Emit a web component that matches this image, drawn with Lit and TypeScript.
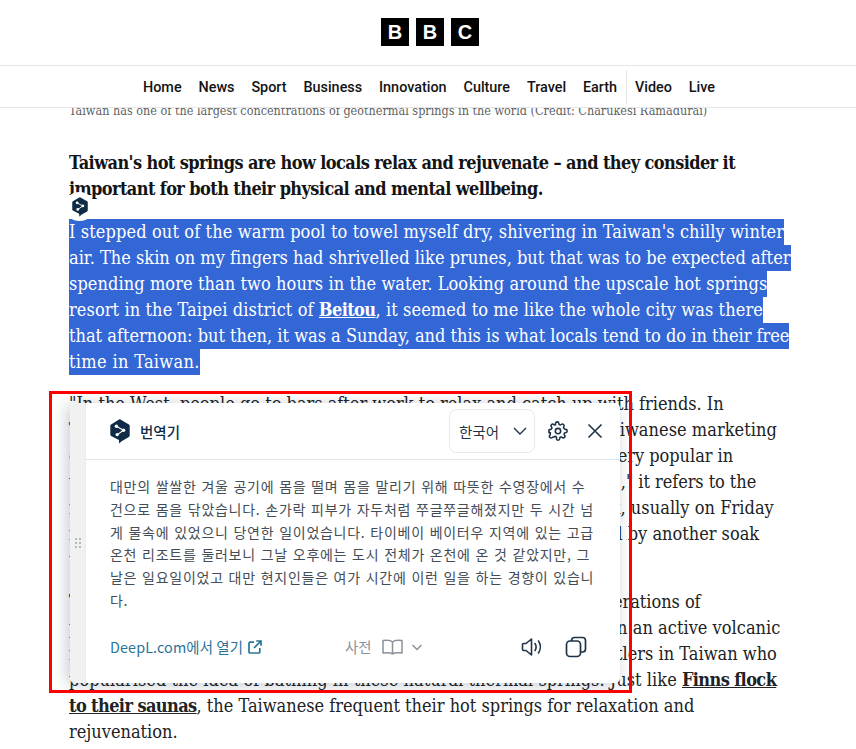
import { LitElement, html, css } from "lit";
import { customElement } from "lit/decorators.js";

const logo = (w: number, h: number) => html`<svg width=${w} height=${h} viewBox="0 0 20 25">
  <path fill="#0f2b46" d="M10 0.3 18.9 5.4a1.6 1.6 0 0 1 .8 1.4V16.6a1.6 1.6 0 0 1-.8 1.4L11.6 22.2 9.2 24.6 8.9 20.9 1.1 16.9a1.6 1.6 0 0 1-.8-1.4V6.8a1.6 1.6 0 0 1 .8-1.4L9 .5a1.6 1.6 0 0 1 1 -.2Z"/>
  <g stroke="#fff" stroke-width="1.1" fill="none"><path d="M6.4 7.3 13.4 11.2 7.4 15.6"/></g>
  <g fill="#fff"><circle cx="6.4" cy="7.3" r="1.7"/><circle cx="13.6" cy="11.2" r="1.7"/><circle cx="7.2" cy="15.6" r="1.7"/></g>
</svg>`;

const navItems = ["Home", "News", "Sport", "Business", "Innovation", "Culture", "Travel", "Earth"];

const track = (v: number) => `letter-spacing:${v}px`;

@customElement("app-root")
export class AppRoot extends LitElement {
  static styles = css`
    :host { display: block; position: relative; width: 856px; height: 749px; overflow: hidden; background: #fff; }
    .top { position: relative; z-index: 1; background: #fff; height: 108px; box-sizing: border-box; border-bottom: 1px solid #e6e6e6; }
    .brand { height: 66px; box-sizing: border-box; padding: 18px 0 0 4px; display: flex; justify-content: center; gap: 7px; border-bottom: 1px solid #e6e6e6; }
    .brand span { width: 28px; height: 28px; background: #000; color: #fff; display: flex; align-items: center; justify-content: center; font: 700 20px "Liberation Sans", sans-serif; }
    nav { height: 41px; box-sizing: border-box; padding: 1px 0 0 2px; display: flex; align-items: center; justify-content: center; font: 500 14.4px Roboto, sans-serif; color: #141414; }
    nav a { padding: 0 8.45px; }
    nav a.sep { border-left: 1px solid #e6e6e6; height: 34px; display: flex; align-items: center; }
    article { margin-top: -5px; padding-left: 69px; font-family: "DejaVu Serif Condensed", "DejaVu Serif", serif; font-size: 18px; line-height: 26px; color: #202224; white-space: nowrap; }
    .cap { font-size: 12.5px; line-height: 16px; color: #5f5f5f; margin-bottom: 31px; }
    .lead { font-weight: 700; margin-bottom: 17px; letter-spacing: -0.6px; color: #141414; }
    .para { margin-bottom: 16px; }
    .sel { display: block; width: fit-content; background: #3367d6; color: #fff; }
    a.u { font-weight: 700; text-decoration: underline; color: inherit; letter-spacing: -0.6px; }

    .chip { position: absolute; left: 64px; top: 192px; width: 31px; height: 29px; border-radius: 50%; background: #fff; display: flex; align-items: center; justify-content: center; z-index: 2; }
    .mark { position: absolute; left: 49px; top: 391px; width: 583px; height: 302px; box-sizing: border-box; border: 3px solid #f00; z-index: 3; pointer-events: none; }
    .panel { position: absolute; left: 70px; top: 403px; width: 550px; height: 280px; display: flex; background: #fff; border-radius: 5px; box-shadow: -3px 2px 16px rgba(15, 43, 70, .24); overflow: hidden; z-index: 2; font-family: "Noto Sans CJK KR", "Noto Sans", sans-serif; }
    .grip { width: 16px; box-sizing: border-box; background: #f1f1f2; flex: none; display: flex; align-items: center; justify-content: center; border-right: 1px solid #ececef; }
    .main { flex: 1; display: flex; flex-direction: column; min-width: 0; }
    .head { height: 57px; box-sizing: border-box; display: flex; align-items: center; padding: 0 16px 0 24px; border-bottom: 1px solid #dfe4ec; }
    .title { margin-left: 10px; font-size: 14.5px; font-weight: 500; color: #0f2b46; }
    .lang { margin-left: auto; width: 86px; height: 44px; box-sizing: border-box; border: 1px solid #e6e9ef; border-radius: 8px; display: flex; align-items: center; justify-content: space-between; padding: 0 5px 0 9px; font-size: 14.5px; color: #1f3347; }
    .gear { margin-left: 13px; display: flex; }
    .x { margin-left: 18px; display: flex; }
    .body { padding: 15px 0 0 24px; font-size: 14px; letter-spacing: .73px; word-spacing: 1px; line-height: 22.8px; color: #444c55; white-space: nowrap; height: 161px; box-sizing: border-box; }
    .foot { flex: 1; display: flex; align-items: center; padding: 0 33px 11px 24px; font-size: 14.4px; }
    .open { color: #2a7398; display: flex; align-items: center; gap: 5px; letter-spacing: .1px; }
    .dict { margin-left: 83px; color: #8a9199; display: flex; align-items: center; gap: 10px; }
    .chev { margin-left: -2px; }
    .acts { margin-left: auto; display: flex; align-items: center; gap: 22px; }
  `;

  render() {
    return html`
      <div class="top">
        <div class="brand"><span>B</span><span>B</span><span>C</span></div>
        <nav>
          ${navItems.map((n) => html`<a>${n}</a>`)}<a class="sep">Video</a><a>Live</a>
        </nav>
      </div>
      <article>
        <div class="cap">Taiwan has one of the largest concentrations of geothermal springs in the world (Credit: Charukesi Ramadurai)</div>
        <div class="lead">Taiwan's hot springs are how locals relax and rejuvenate – and they consider it<br />important for both their physical and mental wellbeing.</div>
        <div class="para">
          <span class="sel" style=${track(0.126)}>I stepped out of the warm pool to towel myself dry, shivering in Taiwan's chilly winter </span>
          <span class="sel" style=${track(0.02)}>air. The skin on my fingers had shrivelled like prunes, but that was to be expected after </span>
          <span class="sel" style=${track(0.085)}>spending more than two hours in the water. Looking around the upscale hot springs </span>
          <span class="sel" style=${track(0.1)}>resort in the Taipei district of <a class="u">Beitou</a>, it seemed to me like the whole city was there </span>
          <span class="sel">that afternoon: but then, it was a Sunday, and this is what locals tend to do in their free </span>
          <span class="sel" style=${track(0.33)}>time in Taiwan.</span>
        </div>
        <div class="para">
          "In the West, people go to bars after work to relax and catch up with friends. In<br />
          <span style=${track(0.045)}>Taiwan, we go to the hot springs with our families," says a local Taiwanese marketing</span><br />
          <span style=${track(-0.04)}>executive who resides and works in the city of Taipei. "Soaking is very popular in</span><br />
          <span style=${track(-0.06)}>winter, and when people say they are going to 'soak in warm water'," it refers to the</span><br />
          <span style=${track(0.05)}>relaxing night together with friends and families after a long week, usually on Friday</span><br />
          night or Saturday morning, with a good meal at the hotels followed by another soak<br />
          the next day.
        </div>
        <div class="para">
          <span style=${track(-0.04)}>The hot springs have been part of Taiwanese culture for many generations of</span><br />
          <span style=${track(0.035)}>people across the island, which sits in a geothermal belt directly on an active volcanic</span><br />
          <span style=${track(0.015)}>range. However, it was the Japanese colonial leaders and early settlers in Taiwan who</span><br />
          <span style=${track(0.04)}>popularised the idea of bathing in these natural thermal springs. Just like</span> <a class="u">Finns flock<br />to their saunas</a>, the Taiwanese frequent their hot springs for relaxation and<br />
          rejuvenation.
        </div>
      </article>

      <div class="chip">${logo(16, 20)}</div>

      <div class="panel">
        <div class="grip">
          <svg width="8" height="12" viewBox="0 0 8 12" fill="#b4b8be"><rect x="1" y="1" width="2" height="2"/><rect x="5" y="1" width="2" height="2"/><rect x="1" y="5" width="2" height="2"/><rect x="5" y="5" width="2" height="2"/><rect x="1" y="9" width="2" height="2"/><rect x="5" y="9" width="2" height="2"/></svg>
        </div>
        <div class="main">
          <div class="head">
            ${logo(20, 25)}
            <span class="title">번역기</span>
            <div class="lang">
              <span>한국어</span>
              <svg width="18" height="18" viewBox="0 0 18 18" fill="none" stroke="#1f3347" stroke-width="1.4"><path d="M3 6l6 6 6-6"/></svg>
            </div>
            <span class="gear">
              <svg width="20" height="20" viewBox="0 0 24 24" fill="none" stroke="#1f3347" stroke-width="1.9" stroke-linejoin="round"><circle cx="12" cy="12" r="3.2"/><path d="M19.4 15a1.65 1.65 0 0 0 .33 1.82l.06.06a2 2 0 1 1-2.83 2.83l-.06-.06a1.65 1.65 0 0 0-2.82 1.17V21a2 2 0 0 1-4 0v-.09A1.65 1.65 0 0 0 7 19.4a1.65 1.65 0 0 0-1.82.33l-.06.06a2 2 0 1 1-2.83-2.83l.06-.06a1.65 1.65 0 0 0-1.17-2.82H3a2 2 0 0 1 0-4h.09A1.65 1.65 0 0 0 4.6 9a1.65 1.65 0 0 0-.33-1.82l-.06-.06a2 2 0 1 1 2.83-2.83l.06.06A1.65 1.65 0 0 0 9 4.6V3a2 2 0 0 1 4 0v.09a1.65 1.65 0 0 0 2.82 1.17l.06-.06a2 2 0 1 1 2.83 2.83l-.06.06A1.65 1.65 0 0 0 19.4 9V9a1.65 1.65 0 0 0 1.51 1H21a2 2 0 0 1 0 4h-.09a1.65 1.65 0 0 0-1.51 1Z"/></svg>
            </span>
            <span class="x">
              <svg width="18" height="18" viewBox="0 0 18 18" fill="none" stroke="#1f3347" stroke-width="1.6"><path d="M2.5 2.5l13 13M15.5 2.5l-13 13"/></svg>
            </span>
          </div>
          <div class="body">
            대만의 쌀쌀한 겨울 공기에 몸을 떨며 몸을 말리기 위해 따뜻한 수영장에서 수<br />
            건으로 몸을 닦았습니다. 손가락 피부가 자두처럼 쭈글쭈글해졌지만 두 시간 넘<br />
            게 물속에 있었으니 당연한 일이었습니다. 타이베이 베이터우 지역에 있는 고급<br />
            온천 리조트를 둘러보니 그날 오후에는 도시 전체가 온천에 온 것 같았지만, 그<br />
            날은 일요일이었고 대만 현지인들은 여가 시간에 이런 일을 하는 경향이 있습니<br />
            다.
          </div>
          <div class="foot">
            <span class="open">DeepL.com에서 열기
              <svg width="14" height="14" viewBox="0 0 14 14" fill="none" stroke="#2a7398" stroke-width="1.7"><path d="M6 2.2H2a1 1 0 0 0-1 1V12a1 1 0 0 0 1 1h8.8a1 1 0 0 0 1-1V8"/><path d="M8.2 1H13v4.8M13 1 6 8"/></svg>
            </span>
            <span class="dict">사전
              <svg width="21" height="16" viewBox="0 0 21 16" fill="none" stroke="#8a9199" stroke-width="1.5" stroke-linejoin="round"><path d="M10.5 3C9 1.4 5 1 1 1.6V14c4-.5 8-.3 9.5 1 1.5-1.3 5.5-1.5 9.5-1V1.6C16 1 12 1.4 10.5 3ZM10.5 3V15"/></svg>
              <svg class="chev" width="12" height="12" viewBox="0 0 12 12" fill="none" stroke="#8a9199" stroke-width="1.5"><path d="M1.5 4l4.5 4.5L10.5 4"/></svg>
            </span>
            <span class="acts">
              <svg width="22" height="20" viewBox="0 0 22 20" fill="none" stroke="#1f3347" stroke-width="1.6" stroke-linejoin="round" stroke-linecap="round"><path d="M1.5 7.5a1 1 0 0 1 1-1H5L10.5 2v16L5 13.5H2.5a1 1 0 0 1-1-1Z"/><path d="M14 6.5c1.3 2 1.3 5 0 7M17.5 4c2.4 3.5 2.4 8.5 0 12"/></svg>
              <svg width="22" height="22" viewBox="0 0 22 22" fill="none" stroke="#1f3347" stroke-width="1.7"><rect x="1.5" y="5" width="14" height="15.5" rx="3.5"/><path d="M6.5 5V4.5a3 3 0 0 1 3-3h8a3 3 0 0 1 3 3V13a3 3 0 0 1-3 3h-2"/></svg>
            </span>
          </div>
        </div>
      </div>

      <div class="mark"></div>
    `;
  }
}
